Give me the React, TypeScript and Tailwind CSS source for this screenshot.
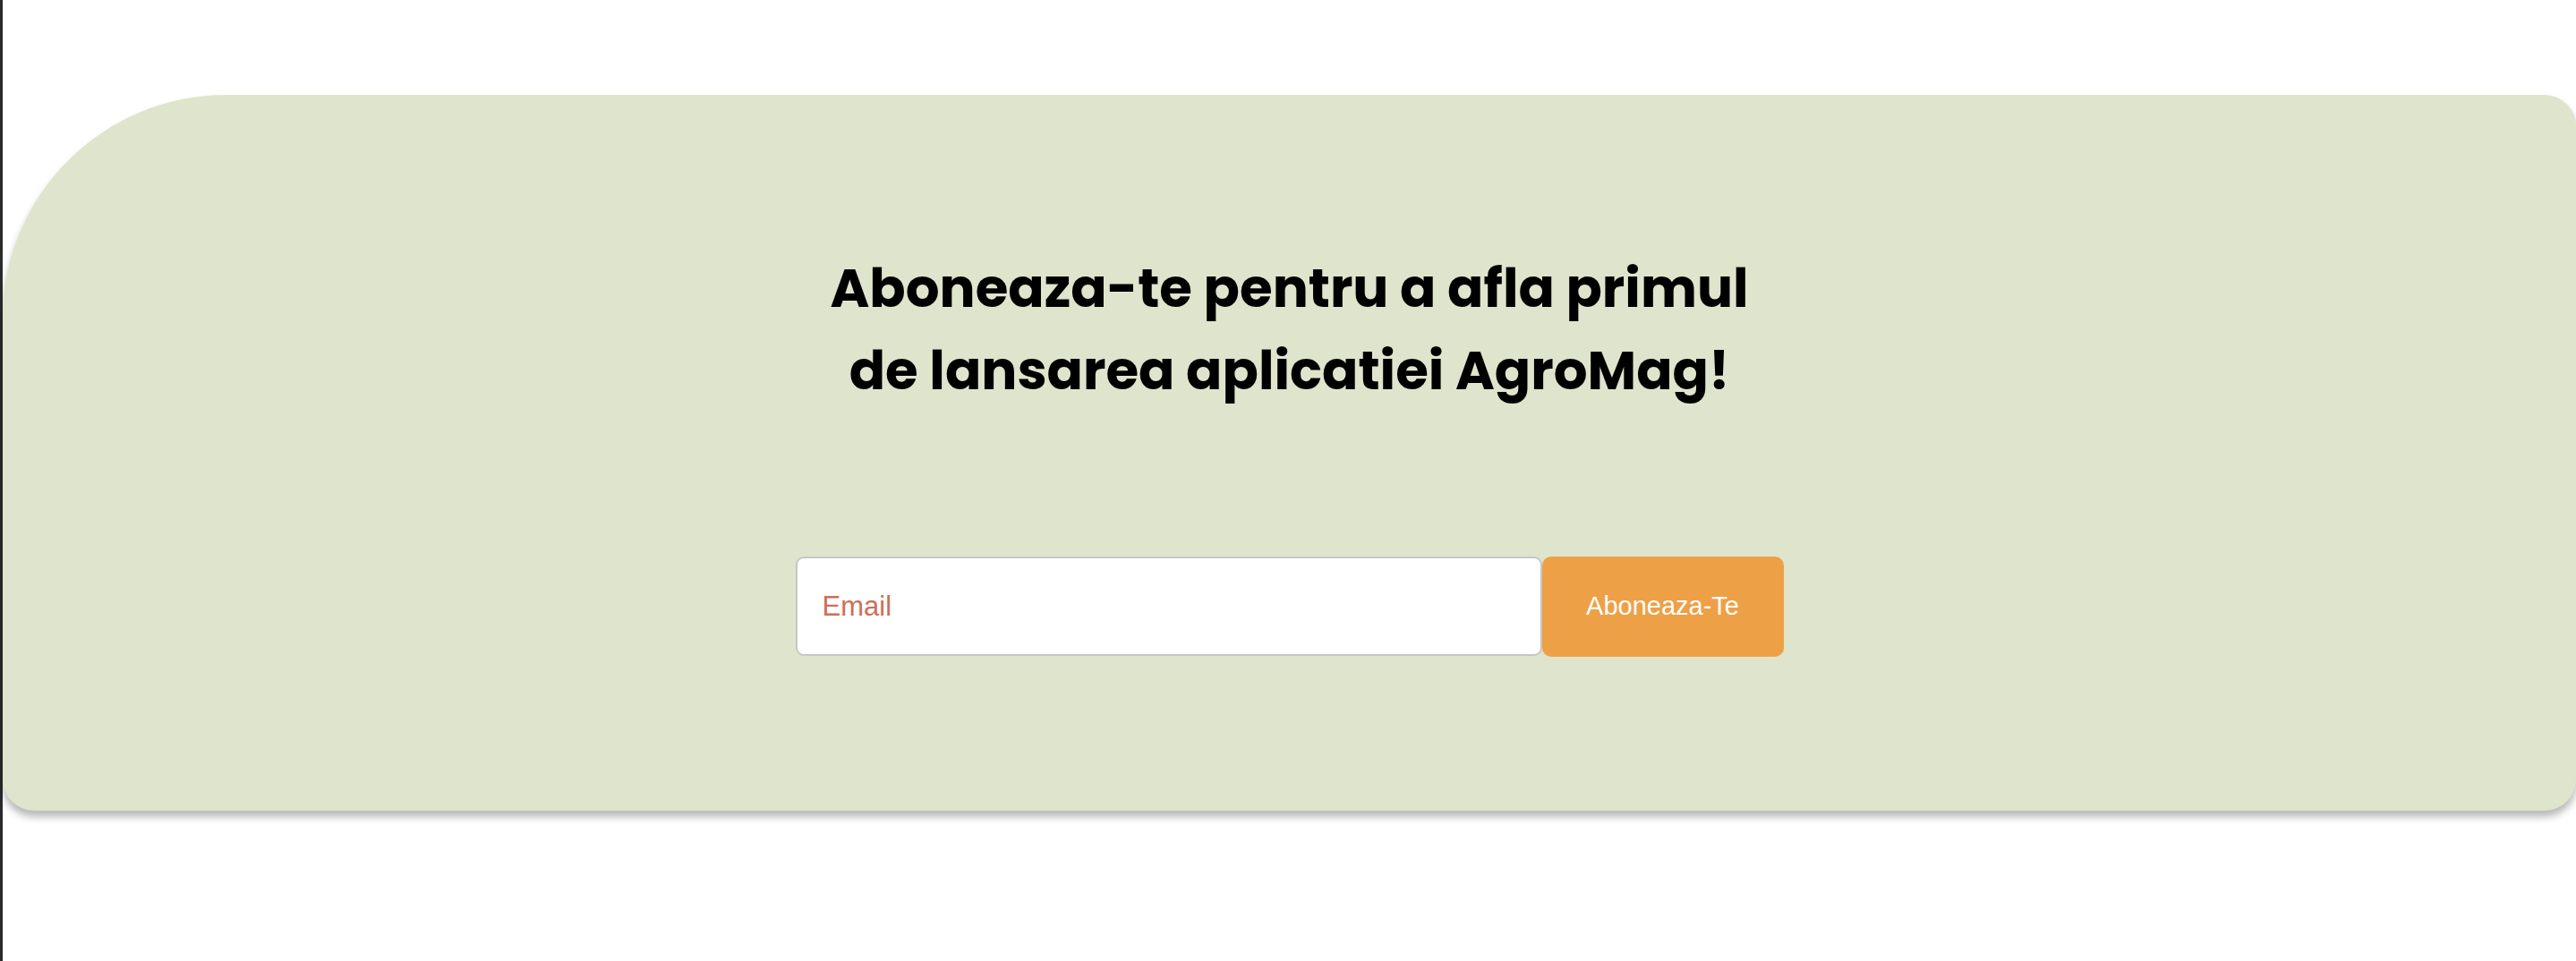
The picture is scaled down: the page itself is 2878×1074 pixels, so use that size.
import React, { useState } from "react";

export default function App() {
  const [email, setEmail] = useState("");

  const handleSubmit = (e: React.FormEvent) => {
    e.preventDefault();
  };

  return (
    <div className="min-h-screen bg-white border-l-[3px] border-[#2a2a2a] pt-[106px]">
      <section className="h-[800px] bg-[#dfe4cc] rounded-tl-[250px] rounded-tr-[35px] rounded-b-[35px] shadow-[0_7px_8px_rgba(0,0,0,0.28)] flex flex-col items-center pt-[171px]">
        <h2
          className="text-center text-black font-bold text-[59.5px] leading-[92px]"
          style={{ fontFamily: "Poppins, Inter, sans-serif" }}
        >
          Aboneaza-te pentru a afla primul
          <br />
          de lansarea aplicatiei AgroMag!
        </h2>

        <form onSubmit={handleSubmit} className="flex mt-[161px]">
          <input
            type="email"
            placeholder="Email"
            value={email}
            onChange={(e) => setEmail(e.target.value)}
            className="w-[834px] h-[111px] bg-white border-2 border-[#c6c6c6] rounded-[9px] pl-[28px] text-[31px] text-black placeholder:text-[#cf6e56] outline-none"
            style={{ fontFamily: '"Liberation Sans", Arial, sans-serif' }}
          />
          <button
            type="submit"
            className="w-[270px] h-[112px] bg-[#eea046] text-white rounded-[10px] text-[29px]"
            style={{ fontFamily: '"Liberation Sans", Arial, sans-serif' }}
          >
            Aboneaza-Te
          </button>
        </form>
      </section>
    </div>
  );
}
